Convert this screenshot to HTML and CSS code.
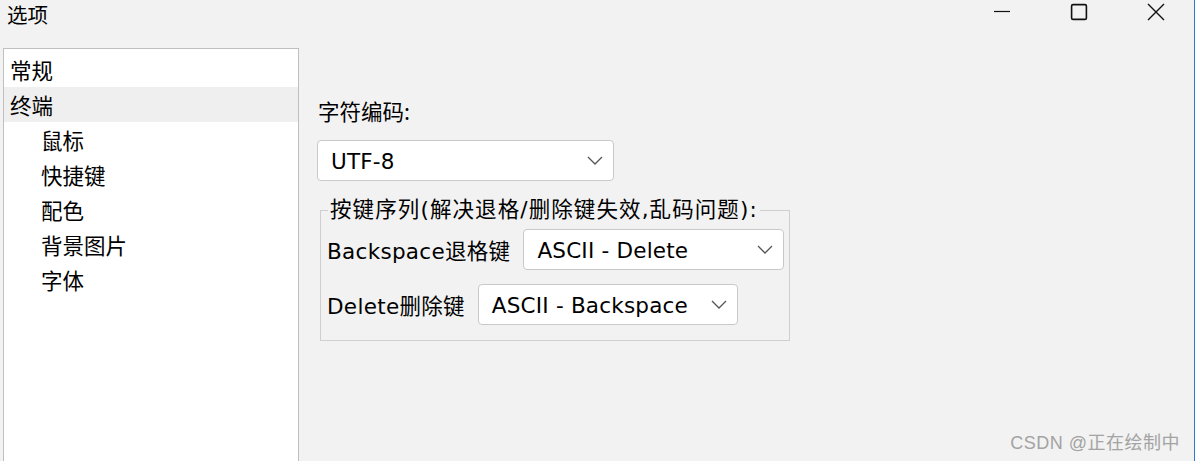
FILE: index.html
```html
<!DOCTYPE html>
<html lang="zh-CN">
<head>
<meta charset="utf-8">
<title>选项</title>
<link rel="stylesheet" href="styles.css">
</head>
<body>
<div class="window">
  <header class="titlebar">
    <span class="title">选项</span>
    <div class="controls">
      <span class="ctl">
        <svg width="18" height="18" viewBox="0 0 18 18"><path d="M1 8.5H17" stroke="#111" stroke-width="1.2" fill="none"/></svg>
      </span>
      <span class="ctl">
        <svg width="18" height="18" viewBox="0 0 18 18"><rect x="1.6" y="1.6" width="14.8" height="14.8" rx="1.5" stroke="#111" stroke-width="1.6" fill="none"/></svg>
      </span>
      <span class="ctl">
        <svg width="18" height="18" viewBox="0 0 18 18"><path d="M1 1L17 17M17 1L1 17" stroke="#111" stroke-width="1.4" fill="none"/></svg>
      </span>
    </div>
  </header>
  <main class="main">
    <nav class="tree">
      <div class="item">常规</div>
      <div class="item selected">终端</div>
      <div class="item child">鼠标</div>
      <div class="item child">快捷键</div>
      <div class="item child">配色</div>
      <div class="item child">背景图片</div>
      <div class="item child">字体</div>
    </nav>
    <section class="pane">
      <div class="label">字符编码:</div>
      <div class="combo combo-enc">
        <span>UTF-8</span>
        <svg class="chev" width="16" height="9" viewBox="0 0 16 9"><path d="M1 1L8 8L15 1" stroke="#555" stroke-width="1.3" fill="none"/></svg>
      </div>
      <fieldset class="group">
        <legend>按键序列(解决退格/删除键失效,乱码问题):</legend>
        <div class="row">
          <span class="rlabel">Backspace退格键</span>
          <div class="combo combo-bs">
            <span>ASCII - Delete</span>
            <svg class="chev" width="16" height="9" viewBox="0 0 16 9"><path d="M1 1L8 8L15 1" stroke="#555" stroke-width="1.3" fill="none"/></svg>
          </div>
        </div>
        <div class="row">
          <span class="rlabel">Delete删除键</span>
          <div class="combo combo-del">
            <span>ASCII - Backspace</span>
            <svg class="chev" width="16" height="9" viewBox="0 0 16 9"><path d="M1 1L8 8L15 1" stroke="#555" stroke-width="1.3" fill="none"/></svg>
          </div>
        </div>
      </fieldset>
    </section>
  </main>
  <div class="watermark">CSDN @正在绘制中</div>
</div>
</body>
</html>
```
FILE: styles.css
```css
* { box-sizing: border-box; }
html, body {
  margin: 0;
  padding: 0;
}
body {
  width: 1195px;
  height: 461px;
  overflow: hidden;
  background: #f2f2f2;
  font-family: "DejaVu Sans", "Noto Sans CJK SC", sans-serif;
  font-size: 21.5px;
  color: #000;
}
.window {
  position: relative;
  width: 1195px;
  height: 461px;
  border-right: 1px solid #2a7ad5;
  display: flex;
  flex-direction: column;
}
.titlebar {
  height: 32px;
  display: flex;
  align-items: center;
  justify-content: space-between;
  padding-left: 7px;
}
.title {
  font-size: 20.5px;
  line-height: 1;
  margin-top: -4px;
  font-family: "Noto Sans CJK SC", sans-serif;
}
.controls {
  display: flex;
  align-self: flex-start;
  padding-top: 3px;
  padding-right: 29px;
  gap: 59px;
}
.ctl { display: block; width: 18px; height: 18px; }
.ctl svg { display: block; }
.main {
  flex: 1;
  display: flex;
  padding-top: 16px;
  padding-left: 3px;
  min-height: 0;
}
.tree {
  width: 296px;
  height: 420px;
  background: #fff;
  border: 1px solid #bfbfbf;
  border-bottom: none;
  padding-top: 3px;
  font-family: "Noto Sans CJK SC", sans-serif;
}
.item {
  height: 35px;
  line-height: 35px;
  padding-left: 6px;
}
.item.selected { background: #efefef; }
.item.child { padding-left: 37px; }
.pane {
  padding-left: 18px;
  padding-top: 48px;
  display: flex;
  flex-direction: column;
  align-items: flex-start;
}
.label {
  font-family: "Noto Sans CJK SC", sans-serif;
  line-height: 30px;
  height: 30px;
  margin-left: 1px;
}
.combo {
  flex-shrink: 0;
  height: 41px;
  background: #fff;
  border: 1px solid #c9c9c9;
  border-radius: 4px;
  display: flex;
  align-items: center;
  justify-content: space-between;
  padding: 0 10px 0 13px;
  letter-spacing: 0.2px;
  white-space: nowrap;
}
.combo span { line-height: 1; padding-top: 2px; }
.chev { display: block; }
.combo-enc { width: 297px; margin-top: 14px; }
.combo-bs { width: 261px; }
.combo-del { width: 260px; }
.group {
  margin: 16px 0 0 3px;
  width: 470px;
  border: 1px solid #cfcfcf;
  padding: 6px 2px 15px 6px;
}
.group legend {
  line-height: 26px;
  letter-spacing: 1.1px;
  padding: 0 2px;
  margin-left: 1px;
  white-space: nowrap;
}
.row {
  display: flex;
  align-items: center;
  gap: 13px;
}
.row + .row { margin-top: 14px; }
.rlabel {
  flex-shrink: 0;
  white-space: nowrap;
  letter-spacing: 0.3px;
}
.watermark {
  position: absolute;
  right: 14px;
  bottom: 7px;
  font-size: 18px;
  letter-spacing: 0.5px;
  color: #a3a3a3;
  font-family: "Liberation Sans", "Noto Sans CJK SC", sans-serif;
}
```
